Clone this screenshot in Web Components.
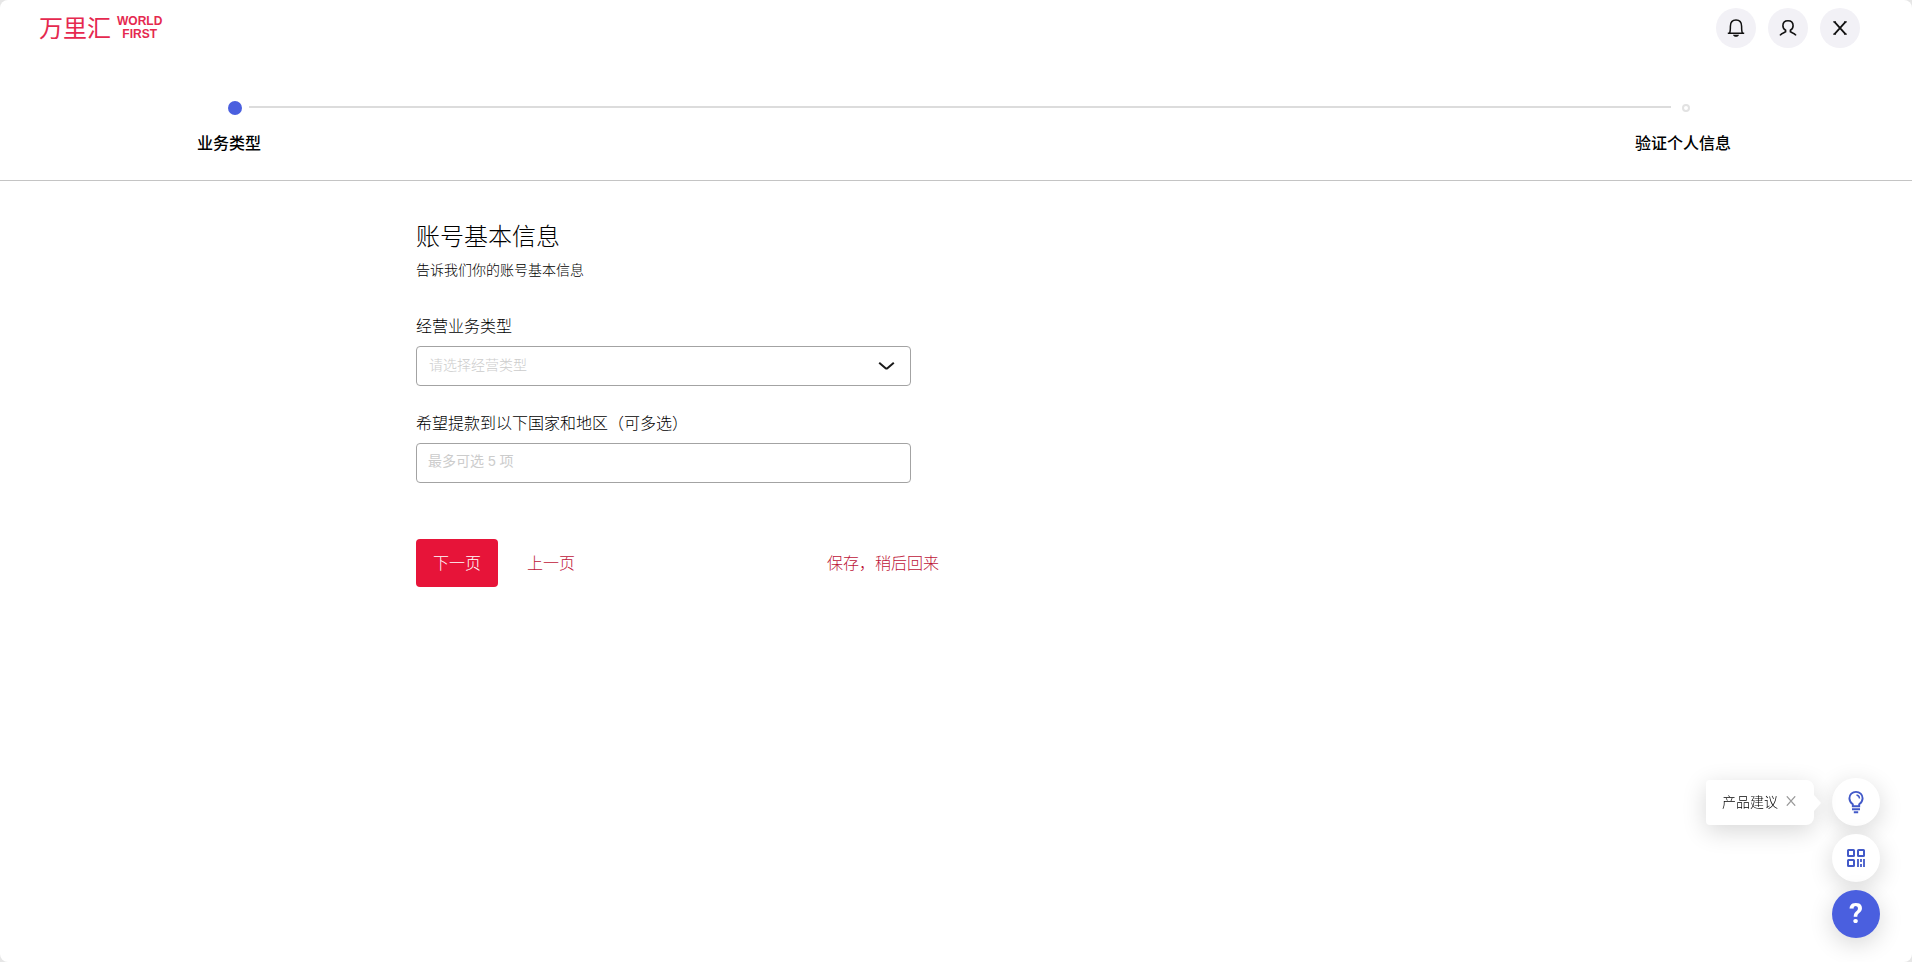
<!DOCTYPE html>
<html lang="zh-CN">
<head>
<meta charset="utf-8">
<meta name="viewport" content="width=device-width, initial-scale=1">
<title>万里汇 WorldFirst</title>
<style>
  html { background: #e6e6e6; height: 100%; }
  body {
    margin: 0;
    min-height: 100%;
    background: #fff;
    border-radius: 8px;
    font-family: "Noto Sans CJK SC", sans-serif;
    font-weight: 300;
    color: #000;
    font-size: 16px;
    line-height: 24px;
  }
</style>
</head>
<body>
<wf-header></wf-header>
<wf-steps><span slot="first">业务类型</span><span slot="last">验证个人信息</span></wf-steps>
<wf-account-form></wf-account-form>
<wf-float-bar><span slot="tip">产品建议</span></wf-float-bar>

<script>
const define = (name, html) => {
  const tpl = document.createElement('template');
  tpl.innerHTML = html;
  customElements.define(name, class extends HTMLElement {
    constructor() {
      super();
      this.attachShadow({ mode: 'open' }).append(tpl.content.cloneNode(true));
    }
  });
};

define('wf-logo', `
<style>
  :host { display: block; }
  a { display: flex; align-items: center; gap: 6px; color: #e5294f; text-decoration: none; }
  .cn { font-size: 24px; line-height: 24px; font-weight: 400; padding-bottom: 2px; }
  .en { font: bold 12px/13px "Liberation Sans", sans-serif; text-align: center; }
  .en span { display: block; }
</style>
<a href="#"><span class="cn">万里汇</span><span class="en"><span>WORLD</span><span>FIRST</span></span></a>`);

define('wf-icon-button', `
<style>
  :host { display: block; }
  button { display: grid; place-items: center; width: 40px; height: 40px; padding: 0; border: 0; border-radius: 50%; background: #f2f1f6; color: #111; cursor: pointer; }
</style>
<button type="button"><slot></slot></button>`);

define('wf-header', `
<style>
  :host { display: block; }
  header { display: flex; justify-content: space-between; align-items: center; padding: 8px 52px 8px 39px; height: 40px; }
  nav { display: flex; gap: 12px; }
  svg { display: block; }
</style>
<header>
  <wf-logo></wf-logo>
  <nav>
    <wf-icon-button aria-label="通知"><svg width="20" height="20" viewBox="0 0 20 20" fill="none" stroke="currentColor" stroke-width="1.5"><path d="M1.8 15.3H18.2M3.5 15.2C4.4 13.6 4.4 12.4 4.4 8.2C4.4 4.2 6.5 1.9 10 1.9S15.6 4.2 15.6 8.2C15.6 12.4 15.6 13.6 16.5 15.2"/><path d="M7 16.8H13C12.6 18.2 11.5 18.8 10 18.8S7.4 18.2 7 16.8Z" fill="currentColor" stroke="none"/></svg></wf-icon-button>
    <wf-icon-button aria-label="账户"><svg width="20" height="20" viewBox="0 0 20 20" fill="none" stroke="currentColor" stroke-width="1.6"><path d="M2 17.4C3.4 15.4 5.6 14.8 7.6 13.8V12.3C5.7 11.2 4.9 9.6 4.9 7.8C4.9 4.6 7 2.7 10 2.7S15.1 4.6 15.1 7.8C15.1 9.600 14.300 11.200 12.400 12.300V13.800C14.400 14.800 16.600 15.400 18 17.400"/></svg></wf-icon-button>
    <wf-icon-button aria-label="关闭"><svg width="20" height="20" viewBox="0 0 20 20" fill="none" stroke="currentColor" stroke-width="1.800"><path d="M4.500 3.800L15.500 16.200M15.500 3.800L4.500 16.200"/><path d="M3.200 3.800H5.800M14.200 3.800H16.800M3.200 16.200H5.800M14.200 16.200H16.800" stroke-width="1.200"/></svg></wf-icon-button>
  </nav>
</header>`);

define('wf-steps', `
<style>
  :host { display: block; padding: 45px 181px 26px 197px; border-bottom: 1px solid #c4c4c4; font-weight: 500; color: #000; }
  .track { display: flex; align-items: center; height: 14px; padding: 0 41px 0 31px; }
  .dot { width: 14px; height: 14px; border-radius: 50%; background: #4a5fdf; }
  .line { flex: 1; height: 2px; margin: 0 11px 2px 7px; background: #dcdcdc; }
  .ring { box-sizing: border-box; width: 8px; height: 8px; border: 2px solid #e2e2e2; border-radius: 50%; }
  .labels { display: flex; justify-content: space-between; padding-top: 15px; line-height: 24px; }
</style>
<div class="track"><i class="dot"></i><i class="line"></i><i class="ring"></i></div>
<div class="labels"><slot name="first"></slot><slot name="last"></slot></div>`);

define('wf-account-form', `
<style>
  :host { display: block; box-sizing: border-box; max-width: 1080px; margin: 0 auto; padding-top: 38px; }
  form { max-width: 523px; }
  h1 { margin: 0; font-size: 24px; line-height: 32px; font-weight: 300; }
  p { margin: 6px 0 0; font-size: 14px; line-height: 24px; }
  .field { max-width: 495px; padding-top: 20px; }
  .field.first { padding-top: 28px; }
  label { display: block; height: 28px; margin-bottom: 9px; line-height: 32px; }
  .box { display: grid; align-items: center; }
  .box > * { grid-area: 1 / 1; }
  select, input { box-sizing: border-box; width: 100%; height: 40px; margin: 0; border: 1px solid #a3a3a3; border-radius: 4px; background: #fff; font: inherit; font-size: 14px; color: #ccc; appearance: none; outline: 0; }
  select { padding: 0 12px 4px; }
  input { padding: 0 11px 4px; color: #000; font-family: "Liberation Sans", "Noto Sans CJK SC", sans-serif; font-weight: 400; }
  input::placeholder { color: #ccc; opacity: 1; }
  svg { justify-self: end; margin-right: 16px; pointer-events: none; }
  .actions { display: flex; align-items: center; padding-top: 56px; }
  button { font: inherit; height: 48px; width: 82px; padding: 0 0 2px; border: 0; border-radius: 4px; background: #e71439; color: #fff; cursor: pointer; }
  a { color: #bd1438; text-decoration: none; padding-bottom: 2px; }
  .prev { margin-left: 29px; }
  .save { margin-left: auto; }
</style>
<form>
  <h1>账号基本信息</h1>
  <p>告诉我们你的账号基本信息</p>
  <div class="field first">
    <label for="biz">经营业务类型</label>
    <div class="box">
      <select id="biz"><option>请选择经营类型</option></select>
      <svg width="17" height="10" viewBox="0 0 17 10" fill="none" stroke="#1a1a1a" stroke-width="2"><path d="M1.2 1.7L7.6 7.2Q8.5 7.9 9.4 7.2L15.8 1.7"/></svg>
    </div>
  </div>
  <div class="field">
    <label for="area">希望提款到以下国家和地区（可多选）</label>
    <div class="box"><input id="area" type="text" placeholder="最多可选 5 项"></div>
  </div>
  <div class="actions">
    <button type="button">下一页</button>
    <a class="prev" href="#">上一页</a>
    <a class="save" href="#">保存，稍后回来</a>
  </div>
</form>`);

define('wf-float-bar', `
<style>
  :host { display: flex; flex-direction: column; align-items: flex-end; gap: 8px; position: fixed; right: 32px; bottom: 24px; }
  .row { display: flex; align-items: center; gap: 18px; }
  .tip { position: relative; display: flex; align-items: center; gap: 8px; box-sizing: border-box; width: 108px; height: 45px; padding: 0 0 2px 16px; background: #fff; border-radius: 4px 8px 8px 4px; box-shadow: 0 6px 24px rgba(0,0,0,.16); font-size: 14px; }
  .tip::after { content: ""; position: absolute; left: 100%; top: 15px; border: 8px solid transparent; border-left: 7px solid #fff; border-right: 0; }
  button { display: grid; place-items: center; padding: 0; border: 0; background: none; cursor: pointer; }
  .round { width: 48px; height: 48px; border-radius: 50%; background: #fff; color: #4259c8; box-shadow: 0 6px 24px rgba(0,0,0,.16); }
  .help { background: #4a5fdf; color: #fff; font: bold 28px/48px Roboto, sans-serif; }
</style>
<div class="row">
  <div class="tip"><slot name="tip"></slot><button type="button" aria-label="关闭提示"><svg width="10" height="10" viewBox="0 0 10 10" stroke="#999" stroke-width="1.2"><path d="M.8 .3L9.2 9.7M9.2 .3L.8 9.7"/></svg></button></div>
  <button class="round" type="button" aria-label="产品建议"><svg width="24" height="24" viewBox="0 0 24 24" fill="none" stroke="currentColor" stroke-width="1.9"><path d="M8.8 16.3V14.2C6.5 12.8 5.4 10.8 5.4 8.3C5.4 4.5 8.3 1.9 12 1.9S18.6 4.5 18.6 8.3C18.6 10.8 17.5 12.8 15.2 14.2V16.3ZM8 19.2H16M9.8 22.2H14.2"/><path d="M12.5 5Q15.4 5.5 15.5 8.5" stroke-width="1.4"/></svg></button>
</div>
<button class="round" type="button" aria-label="二维码"><svg width="18" height="18" viewBox="0 0 18 18" fill="none" stroke="currentColor" stroke-width="2"><rect x="1" y="1" width="6" height="6" rx=".5"/><rect x="11" y="1" width="6" height="6" rx=".5"/><rect x="1" y="11" width="6" height="6" rx=".5"/><path d="M11 10V18M14 10V13M14 15V18M17 10V18" stroke-width="1.8"/></svg></button>
<button class="round help" type="button">?</button>`);
</script>
</body>
</html>
